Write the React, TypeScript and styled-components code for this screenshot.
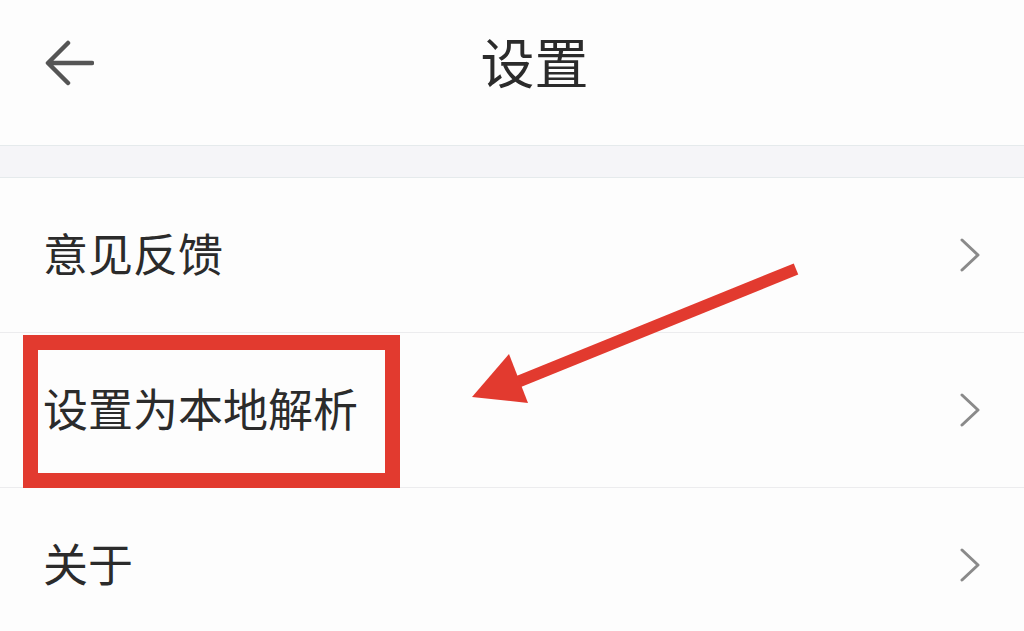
import React from 'react';
import styled, { createGlobalStyle } from 'styled-components';

const GlobalStyle = createGlobalStyle`
  html, body {
    margin: 0;
    padding: 0;
    background: #fdfdfd;
  }
  body {
    font-family: "Noto Sans CJK SC", "Noto Sans", sans-serif;
    color: #2e2e2e;
  }
`;

const Page = styled.div`
  position: relative;
  width: 1024px;
  height: 631px;
  overflow: hidden;
  background: #fdfdfd;
`;

const Header = styled.header`
  display: flex;
  align-items: center;
  height: 145px;
  padding: 0 49px 20px 44px;
  box-sizing: border-box;
`;

const BackButton = styled.button`
  display: flex;
  align-items: center;
  justify-content: center;
  width: 50px;
  height: 50px;
  padding: 0;
  border: none;
  background: transparent;
  cursor: pointer;
`;

const Title = styled.h1`
  flex: 1;
  margin: 0 0 4px;
  text-align: center;
  font-size: 54px;
  font-weight: 400;
  color: #2b2b2b;
  line-height: 1;
`;

const Gap = styled.div`
  height: 31px;
  background: #f5f5f8;
  border-top: 1px solid #e5eaec;
  border-bottom: 1px solid #e5eaec;
`;

const List = styled.ul`
  list-style: none;
  margin: 0;
  padding: 0;
`;

const Row = styled.li`
  display: flex;
  align-items: center;
  justify-content: space-between;
  height: 155px;
  padding: 0 44px 0 43px;
  box-sizing: border-box;
  border-bottom: 1px solid #ececee;
  cursor: pointer;
`;

const Label = styled.span`
  font-size: 45px;
  line-height: 1;
  color: #2b2b2b;
  margin-bottom: 5px;
`;

const Highlight = styled.div`
  position: absolute;
  left: 23px;
  top: 335px;
  width: 377px;
  height: 153px;
  border: 15px solid #e23a2f;
  box-sizing: border-box;
  pointer-events: none;
`;

const Pointer = styled.svg`
  position: absolute;
  left: 0;
  top: 0;
  pointer-events: none;
`;

const Chevron = () => (
  <svg width="20" height="34" viewBox="0 0 20 34">
    <polyline points="2,2 18,17 2,32" fill="none" stroke="#8a8a8a" strokeWidth="3" strokeLinecap="round" strokeLinejoin="round" />
  </svg>
);

const items = ['意见反馈', '设置为本地解析', '关于'];

const App: React.FC = () => {
  return (
    <Page>
      <GlobalStyle />
      <Header>
        <BackButton aria-label="返回">
          <svg width="50" height="46" viewBox="0 0 50 46">
            <path d="M48 23 H6 M24 3 L4 23 L24 43" fill="none" stroke="#555" strokeWidth="4.5" strokeLinecap="round" strokeLinejoin="round" />
          </svg>
        </BackButton>
        <Title>设置</Title>
      </Header>
      <Gap />
      <List>
        {items.map(item => (
          <Row key={item}>
            <Label>{item}</Label>
            <Chevron />
          </Row>
        ))}
      </List>

      <Highlight />
      <Pointer width="1024" height="631" viewBox="0 0 1024 631">
        <line x1="796" y1="269" x2="515" y2="383" stroke="#e23a2f" strokeWidth="12" />
        <polygon points="472,397 509,354 528,403" fill="#e23a2f" />
      </Pointer>
    </Page>
  );
};

export default App;
